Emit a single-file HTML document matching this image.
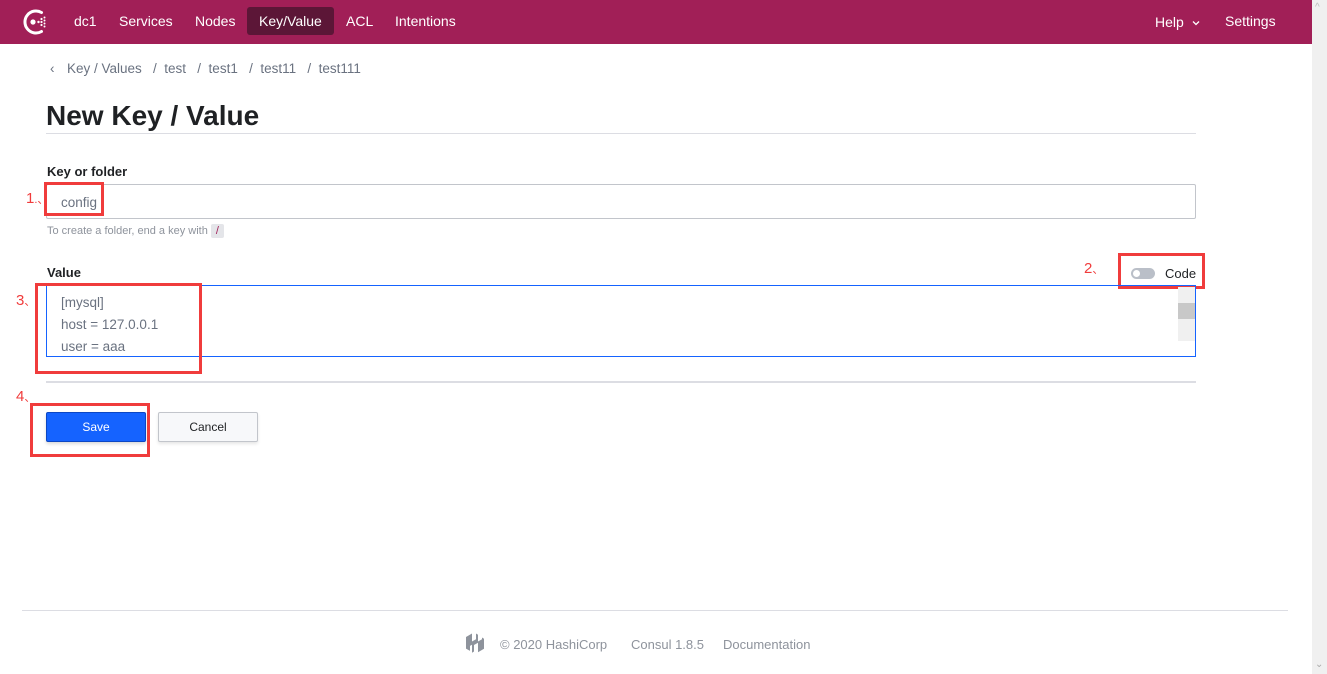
<!DOCTYPE html>
<html><head><meta charset="utf-8"><style>
*{box-sizing:border-box;margin:0;padding:0}
body{width:1327px;height:674px;overflow:hidden;background:#fff;font-family:"Liberation Sans","Noto Sans CJK SC",sans-serif;position:relative}
.hdr{position:absolute;left:0;top:0;width:1312px;height:44px;background:#a11f57}
.nav{position:absolute;top:7px;height:28px;line-height:28px;color:#fff;font-size:14px;padding:0 12px}
.act{background:#5c1637;border-radius:3px}
.sb{position:absolute;right:0;top:0;width:15px;height:674px;background:#f0f0f0}
.bc{position:absolute;top:61px;font-size:13.5px;color:#6a7280}
h1{position:absolute;left:46px;top:100px;font-size:28px;font-weight:bold;color:#1f2124}
.hr{position:absolute;left:46px;width:1150px;height:2px;background:#dcdde3}
.lbl{position:absolute;left:47px;font-size:13px;font-weight:bold;color:#1f2124}
.red{position:absolute;border:3px solid #f03c3c}
.rn{position:absolute;color:#f03c3c;font-size:15px}
.txt{position:absolute;left:61px;font-size:13.5px;color:#6a7280}
</style></head><body>
<div class="hdr">
<svg style="position:absolute;left:20px;top:7px" width="30" height="30" viewBox="0 0 30 30"><path d="M21.5 5.5A11 11 0 1 0 21.5 24.5" stroke="#fff" stroke-width="3" fill="none" stroke-linecap="round"/><circle cx="13" cy="15" r="2.6" fill="#fff"/><g fill="#fff"><circle cx="18.5" cy="15" r="1.2"/><circle cx="21.5" cy="12" r="1.1"/><circle cx="21.5" cy="15" r="1.1"/><circle cx="21.5" cy="18" r="1.1"/><circle cx="24.5" cy="10.5" r="1"/><circle cx="24.5" cy="13.5" r="1"/><circle cx="24.5" cy="16.5" r="1"/><circle cx="24.5" cy="19.5" r="1"/></g></svg>
<div class="nav" style="left:62px">dc1</div>
<div class="nav" style="left:107px">Services</div>
<div class="nav" style="left:183px">Nodes</div>
<div class="nav act" style="left:247px">Key/Value</div>
<div class="nav" style="left:334px">ACL</div>
<div class="nav" style="left:383px">Intentions</div>
<div class="nav" style="left:1143px;top:8px">Help <svg width="10" height="8" viewBox="0 0 10 8" style="margin-left:3px"><path d="M2 2.5l3 3 3-3" stroke="#fff" stroke-width="1.3" fill="none"/></svg></div>
<div class="nav" style="left:1213px">Settings</div>
</div>
<div class="sb"><div style="position:absolute;left:3px;top:2px;color:#bbb;font-size:10px">&#94;</div><div style="position:absolute;left:3px;bottom:4px;color:#aaa;font-size:10px">&#8964;</div></div>

<div class="bc" style="left:50px">&lsaquo;</div>
<div class="bc" style="left:67px">Key / Values&nbsp;&nbsp;&nbsp;/&nbsp;&nbsp;test&nbsp;&nbsp;&nbsp;/&nbsp;&nbsp;test1&nbsp;&nbsp;&nbsp;/&nbsp;&nbsp;test11&nbsp;&nbsp;&nbsp;/&nbsp;&nbsp;test111</div>
<h1>New Key / Value</h1>
<div class="hr" style="top:133px;height:1px"></div>

<div class="lbl" style="top:164px">Key or folder</div>
<div style="position:absolute;left:46px;top:184px;width:1150px;height:35px;border:1px solid #c2c5cb;border-radius:2px"></div>
<div class="txt" style="top:195px">config</div>
<div class="red" style="left:44px;top:182px;width:60px;height:34px"></div>
<div class="rn" style="left:26px;top:190px">1<span style="font-size:11px">.、</span></div>
<div style="position:absolute;left:47px;top:225px;font-size:11px;color:#8e939c">To create a folder, end a key with <span style="background:#e4e5e9;padding:1px 5px;border-radius:2px;color:#a11f57">/</span></div>

<div class="lbl" style="top:265px">Value</div>
<div style="position:absolute;left:1131px;top:268px;width:24px;height:11px;background:#babfc8;border-radius:6px"><div style="position:absolute;left:2px;top:2px;width:7px;height:7px;background:#fff;border-radius:50%"></div></div>
<div style="position:absolute;left:1165px;top:266px;font-size:13px;color:#1f2124">Code</div>
<div class="red" style="left:1118px;top:253px;width:87px;height:36px"></div>
<div class="rn" style="left:1084px;top:260px">2<span style="font-size:11px">、</span></div>

<div style="position:absolute;left:46px;top:285px;width:1150px;height:72px;border:1px solid #1563ff"></div>
<div style="position:absolute;left:1178px;top:287px;width:17px;height:54px;background:#f0f0f0"><div style="position:absolute;left:0;top:16px;width:17px;height:16px;background:#c8c8c8"></div></div>
<div class="txt" style="top:292px;line-height:22px">[mysql]<br>host = 127.0.0.1<br>user = aaa</div>
<div class="red" style="left:35px;top:283px;width:167px;height:91px"></div>
<div class="rn" style="left:16px;top:292px">3<span style="font-size:11px">、</span></div>

<div class="hr" style="top:381px"></div>

<div style="position:absolute;left:46px;top:412px;width:100px;height:30px;background:#1563ff;border:1px solid #0c47c4;border-radius:2px;color:#fff;font-size:12px;text-align:center;line-height:28px;box-shadow:0 2px 3px rgba(0,0,0,.15)">Save</div>
<div style="position:absolute;left:158px;top:412px;width:100px;height:30px;background:#f7f8fa;border:1px solid #c2c5cb;border-radius:2px;color:#1f2124;font-size:12px;text-align:center;line-height:28px;box-shadow:0 2px 3px rgba(0,0,0,.1)">Cancel</div>
<div class="red" style="left:30px;top:403px;width:120px;height:54px"></div>
<div class="rn" style="left:16px;top:388px">4<span style="font-size:11px">、</span></div>

<div style="position:absolute;left:22px;top:610px;width:1266px;height:1px;background:#dcdde3"></div>
<svg style="position:absolute;left:464px;top:632px" width="22" height="22" viewBox="0 0 22 22"><path d="M2 5l6-3.5v8l4-2.3v-5.7l2 1.2v8l-4 2.3v6.5l-2 1.2v-8l-2 1.2v5l-4-2.3z M14 9.5l4-2.3v-1.7l2 1.2v10l-6 3.5z" fill="#8e939c"/></svg>
<div style="position:absolute;left:500px;top:637px;font-size:13px;color:#8e939c">© 2020 HashiCorp</div>
<div style="position:absolute;left:631px;top:637px;font-size:13px;color:#8e939c">Consul 1.8.5</div>
<div style="position:absolute;left:723px;top:637px;font-size:13px;color:#8e939c">Documentation</div>
</body></html>
